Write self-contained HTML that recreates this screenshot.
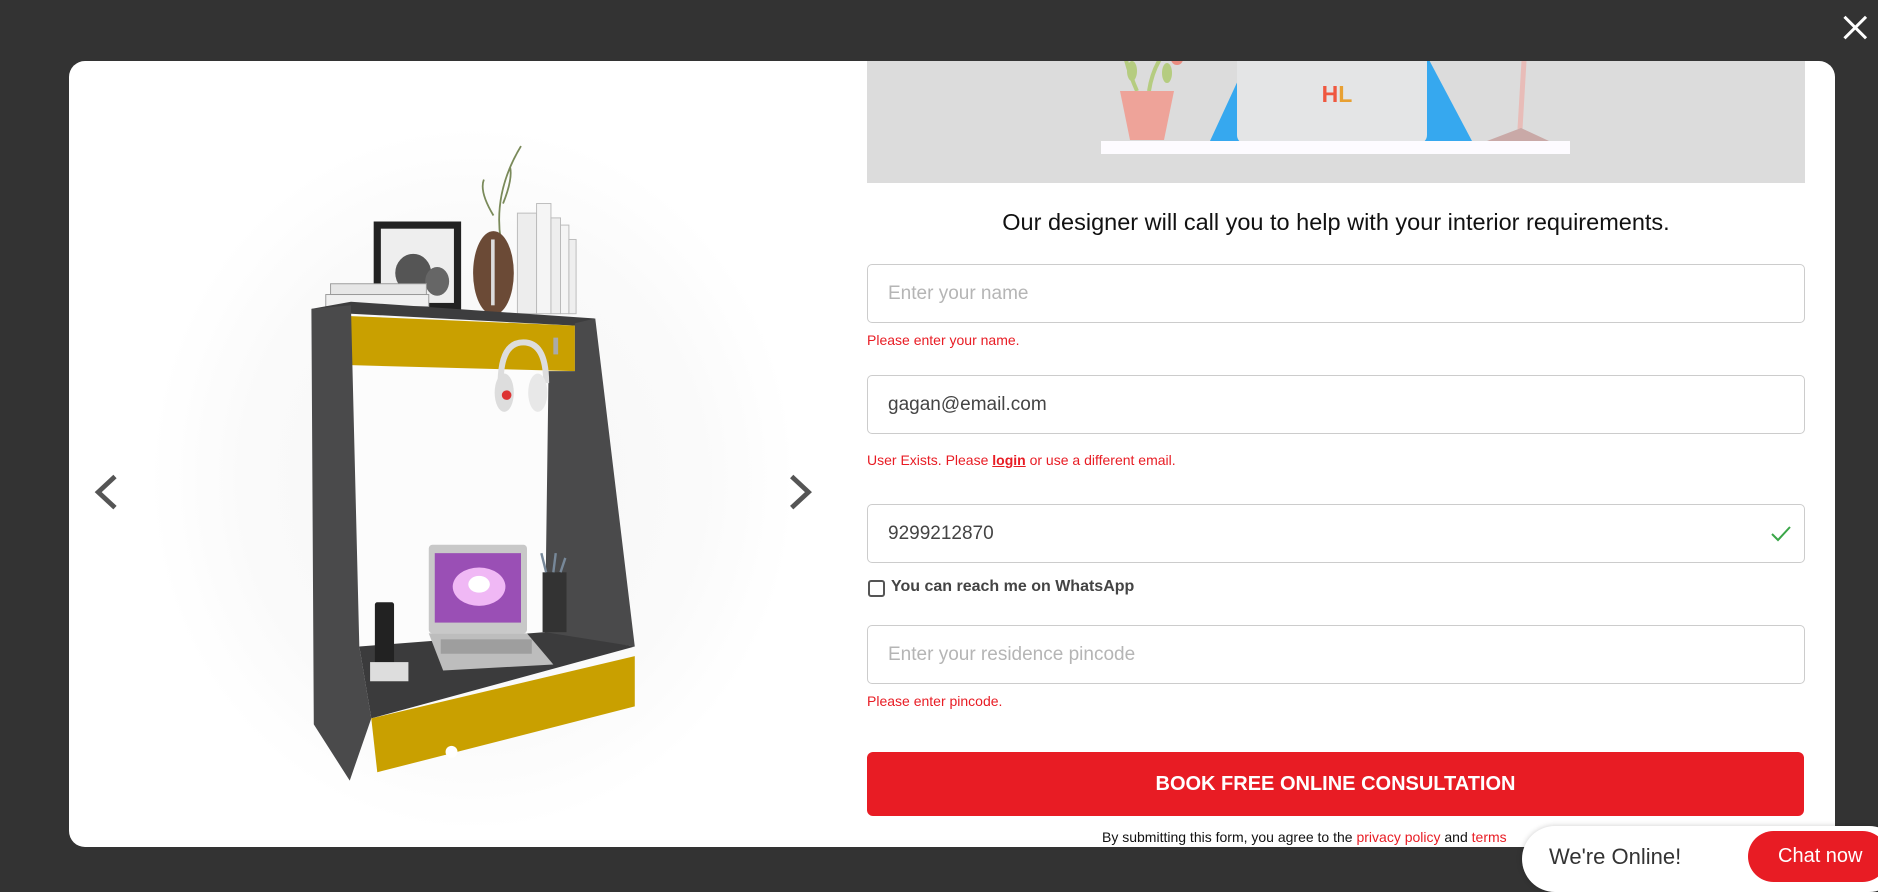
<!DOCTYPE html>
<html><head><meta charset="utf-8">
<style>
*{box-sizing:border-box;margin:0;padding:0}
html,body{width:1878px;height:886px;overflow:hidden;background:#333;font-family:"Liberation Sans",sans-serif}
.modal{position:absolute;left:69px;top:61px;width:1766px;height:786px;background:#fff;border-radius:16px;overflow:hidden}
.abs{position:absolute}
.inp{position:absolute;left:867px;width:938px;height:59px;border:1px solid #ccc;border-radius:5px;background:#fff;font-size:19px;padding-left:20px;line-height:57px;color:#444}
.ph{color:#b5b5b5}
.err{position:absolute;left:867px;font-size:14px;color:#e81c24}
</style></head><body>
<div class="modal"></div>
<svg class="abs" style="left:0;top:0" width="1878" height="886" viewBox="0 0 1568 740" preserveAspectRatio="none">
 <defs><radialGradient id="g" cx="50%" cy="50%" r="50%"><stop offset="0" stop-color="#f6f6f6"/><stop offset="0.7" stop-color="#fafafa"/><stop offset="1" stop-color="#fff"/></radialGradient></defs>
 <ellipse cx="395" cy="400" rx="270" ry="295" fill="url(#g)"/>
 <!-- arrows -->
 <path d="M96 398 L82 411 L96 424" fill="none" stroke="#555" stroke-width="4"/>
 <path d="M661 398 L675 411 L661 424" fill="none" stroke="#555" stroke-width="4"/>
 <!-- back panel -->
 <rect x="293" y="300" width="190" height="240" fill="#fcfcfc"/>
 <!-- top items -->
 <path d="M418 200 Q412 160 435 122 M412 180 Q400 160 404 150 M420 170 Q428 150 426 140" stroke="#7a8a5a" stroke-width="1.5" fill="none"/>
 <rect x="312" y="185" width="73" height="75" fill="#222"/>
 <rect x="318" y="191" width="61" height="62" fill="#eee"/>
 <ellipse cx="345" cy="228" rx="15" ry="16" fill="#555"/>
 <ellipse cx="365" cy="235" rx="10" ry="12" fill="#666"/>
 <rect x="276" y="237" width="80" height="9" fill="#e6e6e6" stroke="#999" stroke-width=".8"/>
 <rect x="272" y="246" width="86" height="10" fill="#f0f0f0" stroke="#999" stroke-width=".8"/>
 <ellipse cx="412" cy="228" rx="17" ry="35" fill="#6b4a36"/>
 <rect x="410" y="200" width="3" height="55" fill="#ddd"/>
 <rect x="432" y="178" width="16" height="84" fill="#ededed" stroke="#bbb" stroke-width=".8"/>
 <rect x="448" y="170" width="12" height="92" fill="#f5f5f5" stroke="#bbb" stroke-width=".8"/>
 <rect x="460" y="182" width="8" height="80" fill="#eee" stroke="#bbb" stroke-width=".8"/>
 <rect x="468" y="188" width="7" height="74" fill="#f5f5f5" stroke="#bbb" stroke-width=".8"/>
 <rect x="475" y="200" width="6" height="62" fill="#eee" stroke="#bbb" stroke-width=".8"/>
 <!-- frame -->
 <polygon points="260,258 293,252 497,266 480,272 293,262" fill="#3d3d3e"/>
 <polygon points="293,264 480,272 480,310 293,305" fill="#c9a000"/>
 <polygon points="260,258 293,255 300,540 310,600 292,652 262,605" fill="#4a4a4b"/>
 <polygon points="480,270 497,266 530,540 455,530 458,310 480,310" fill="#4a4a4b"/>
 <polygon points="300,540 455,528 530,540 310,600" fill="#3b3b3c"/>
 <polygon points="310,600 530,548 530,590 315,645" fill="#c9a000"/>
 <circle cx="377" cy="628" r="5" fill="#fff"/>
 <rect x="462" y="282" width="4" height="14" fill="#aaa"/>
 <!-- headphones -->
 <path d="M418 320 Q418 286 437 286 Q456 286 456 320" stroke="#ddd" stroke-width="5" fill="none"/>
 <ellipse cx="421" cy="328" rx="8" ry="16" fill="#ddd"/>
 <ellipse cx="449" cy="328" rx="8" ry="16" fill="#e8e8e8"/>
 <circle cx="423" cy="330" r="4" fill="#d33"/>
 <!-- laptop -->
 <rect x="358" y="455" width="82" height="74" rx="3" fill="#c8c8c8"/>
 <rect x="363" y="462" width="72" height="58" fill="#9a4fb5"/>
 <ellipse cx="400" cy="490" rx="22" ry="16" fill="#f0b8f5"/>
 <ellipse cx="400" cy="488" rx="9" ry="7" fill="#fff"/>
 <polygon points="358,529 440,529 462,555 370,560" fill="#bdbdbd"/>
 <rect x="368" y="534" width="76" height="12" fill="#888" opacity=".6"/>
 <!-- phone -->
 <rect x="313" y="503" width="16" height="52" rx="2" fill="#222"/>
 <rect x="309" y="553" width="32" height="16" fill="#ddd"/>
 <!-- pencils -->
 <rect x="453" y="478" width="20" height="50" fill="#333"/>
 <path d="M456 478 L452 462 M462 478 L464 462 M468 478 L472 466" stroke="#789" stroke-width="2"/>
 <!-- close -->
 <path d="M1540 14 L1558 32 M1558 14 L1540 32" stroke="#fff" stroke-width="2.5"/>
</svg>
<!-- banner -->
<div class="abs" style="left:867px;top:61px;width:938px;height:122px;background:#dcdcdc;overflow:hidden">
 <svg width="938" height="122">
  <path d="M270 30 Q262 12 258 -5 M282 30 Q285 10 295 -5" stroke="#b5cc80" stroke-width="4" fill="none"/>
  <ellipse cx="265" cy="10" rx="5" ry="10" fill="#b5cc80"/><ellipse cx="300" cy="12" rx="5" ry="10" fill="#b5cc80"/>
  <circle cx="310" cy="-2" r="6" fill="#ea8c80"/>
  <polygon points="253,30 307,30 297,79 263,79" fill="#eea399"/>
  <polygon points="373,15 343,80 382,80" fill="#36a8ef"/>
  <polygon points="560,-5 605,80 555,80" fill="#36a8ef"/>
  <rect x="370" y="-10" width="190" height="93" rx="9" fill="#e4e5e6"/>
  <text x="470" y="41" text-anchor="middle" font-size="23" font-weight="bold" fill="#ef5840" font-family="Liberation Sans,sans-serif">H<tspan fill="#e8a032">L</tspan></text>
  <path d="M657 0 L653 68" stroke="#e8bcb8" stroke-width="5"/>
  <polygon points="620,80 654,67 682,80" fill="#c9a9a7"/>
  <rect x="234" y="80" width="469" height="13" fill="#fdfbff"/>
 </svg>
</div>
<div class="abs" style="left:867px;top:209px;width:938px;text-align:center;font-size:23.5px;color:#111">Our designer will call you to help with your interior requirements.</div>
<div class="inp ph" style="top:264px">Enter your name</div>
<div class="err" style="top:332px">Please enter your name.</div>
<div class="inp" style="top:375px">gagan@email.com</div>
<div class="err" style="top:452px">User Exists. Please <b style="text-decoration:underline">login</b> or use a different email.</div>
<div class="inp" style="top:504px">9299212870<svg class="abs" style="right:12px;top:20px" width="22" height="18"><path d="M2 9 L8 15 L20 2" fill="none" stroke="#3aa648" stroke-width="2"/></svg></div>
<div class="abs" style="left:868px;top:580px;width:17px;height:17px;border:2px solid #555;border-radius:3px;background:#fff"></div>
<div class="abs" style="left:891px;top:578px;font-size:16px;font-weight:bold;color:#444">You can reach me on WhatsApp</div>
<div class="inp ph" style="top:625px">Enter your residence pincode</div>
<div class="err" style="top:693px">Please enter pincode.</div>
<div class="abs" style="left:867px;top:752px;width:937px;height:64px;background:#e81c24;border-radius:6px;color:#fff;font-weight:bold;font-size:20px;text-align:center;line-height:64px">BOOK FREE ONLINE CONSULTATION</div>
<div class="abs" style="left:1102px;top:829px;font-size:14px;color:#111">By submitting this form, you agree to the <span style="color:#e81c24">privacy policy</span> and <span style="color:#e81c24">terms</span></div>
<div class="abs" style="left:1522px;top:826px;width:380px;height:66px;background:#fff;border-radius:33px;box-shadow:0 0 6px rgba(0,0,0,.2)"></div>
<div class="abs" style="left:1549px;top:844px;font-size:22px;color:#333">We're Online!</div>
<div class="abs" style="left:1748px;top:831px;width:140px;height:51px;background:#e81c24;border-radius:26px;color:#fff;font-size:20px;line-height:51px;padding-left:30px">Chat now</div>
</body></html>
